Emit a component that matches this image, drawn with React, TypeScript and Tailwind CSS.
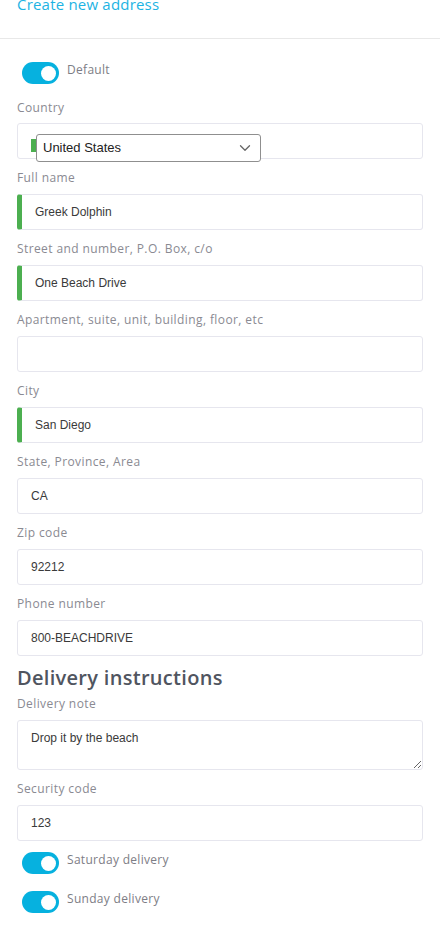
import React from 'react';
import { ChevronDown } from 'lucide-react';

const labelFont = { fontFamily: '"Open Sans", "Liberation Sans", sans-serif' };
const inputFont = { fontFamily: '"Liberation Sans", Arial, sans-serif' };

interface FieldProps {
  label: string;
  value?: string;
  valid?: boolean;
}

const Toggle: React.FC<{ label: string; className?: string }> = ({ label, className = '' }) => (
  <div className={`flex items-start pl-[22px] ${className}`}>
    <div className="w-[37px] h-[22px] rounded-full bg-[#06b1df] flex items-center justify-end pr-[3px]">
      <div className="w-[15px] h-[15px] rounded-full bg-white" />
    </div>
    <span className="ml-[8px] text-[12px] leading-4 tracking-[0.3px] text-[#7d7d85]" style={labelFont}>
      {label}
    </span>
  </div>
);

const Field: React.FC<FieldProps> = ({ label, value = '', valid = false }) => (
  <div className="pt-[11px]">
    <div className="text-[12px] leading-4 tracking-[0.4px] text-[#8a8a92] mb-2" style={labelFont}>
      {label}
    </div>
    <div
      className={`h-9 rounded-[3px] border border-[#e6e6ee] flex items-center pl-[13px] text-[12px] text-[#3a3a3a] ${
        valid ? 'border-l-[5px] border-l-[#4caf50]' : ''
      }`}
      style={inputFont}
    >
      {value}
    </div>
  </div>
);

export default function App() {
  return (
    <div className="w-[440px] min-h-[926px] bg-white overflow-hidden">
      {/* Header */}
      <div className="h-[39px] border-b border-[#e8e8e8] flex flex-col">
        <div className="-mt-[6px] pl-[17px] text-[15px] leading-5 tracking-[0.2px] text-[#1cb3e3]" style={labelFont}>
          Create new address
        </div>
      </div>

      <div className="px-[17px] pt-[23px]">
        <div className="-mx-[17px]">
          <Toggle label="Default" />
        </div>

        {/* Country */}
        <div className="pt-[16px]">
          <div className="text-[12px] leading-4 tracking-[0.4px] text-[#8a8a92] mb-[7px]" style={labelFont}>
            Country
          </div>
          <div className="h-9 rounded-[3px] border border-[#e6e6ee] pl-[13px] pt-[10px] overflow-visible">
            <div className="flex items-start">
              <div className="w-[5px] h-[13px] mt-[5px] bg-[#4caf50]" />
              <div
                className="w-[225px] h-[28px] rounded-[3px] border border-[#8f8f8f] bg-white flex items-center justify-between pl-[6px] pr-[6px] text-[13px] text-[#222]"
                style={inputFont}
              >
                <span>United States</span>
                <ChevronDown className="w-[18px] h-[18px] text-[#666]" strokeWidth={1.75} />
              </div>
            </div>
          </div>
        </div>

        <Field label="Full name" value="Greek Dolphin" valid />
        <Field label="Street and number, P.O. Box, c/o" value="One Beach Drive" valid />
        <Field label="Apartment, suite, unit, building, floor, etc" />
        <Field label="City" value="San Diego" valid />
        <Field label="State, Province, Area" value="CA" />
        <Field label="Zip code" value="92212" />
        <Field label="Phone number" value="800-BEACHDRIVE" />

        {/* Delivery instructions */}
        <div className="mt-[6px] text-[20px] leading-8 font-semibold tracking-[0.3px] text-[#50555f]" style={labelFont}>
          Delivery instructions
        </div>
        <div className="text-[12px] leading-4 tracking-[0.4px] text-[#8a8a92] mb-2 mt-[2px]" style={labelFont}>
          Delivery note
        </div>
        <textarea
          readOnly
          defaultValue="Drop it by the beach"
          className="block w-full h-[50px] rounded-[3px] border border-[#e6e6ee] pl-[13px] pt-[8px] text-[12px] text-[#3a3a3a] outline-none"
          style={inputFont}
        />

        <Field label="Security code" value="123" />
      </div>

      <Toggle label="Saturday delivery" className="mt-[11px]" />
      <Toggle label="Sunday delivery" className="mt-[17px]" />
    </div>
  );
}
